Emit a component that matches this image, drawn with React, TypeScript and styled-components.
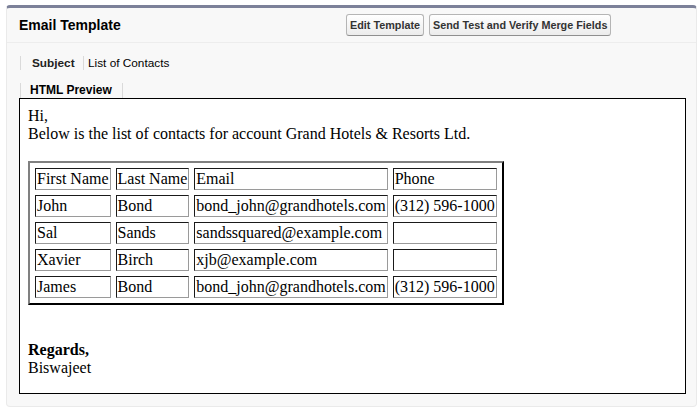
import React from "react";
import styled, { createGlobalStyle } from "styled-components";

type Contact = {
  first: string;
  last: string;
  email: string;
  phone: string;
};

const contacts: Contact[] = [
  { first: "John", last: "Bond", email: "bond_john@grandhotels.com", phone: "(312) 596-1000" },
  { first: "Sal", last: "Sands", email: "sandssquared@example.com", phone: "" },
  { first: "Xavier", last: "Birch", email: "xjb@example.com", phone: "" },
  { first: "James", last: "Bond", email: "bond_john@grandhotels.com", phone: "(312) 596-1000" },
];

const GlobalStyle = createGlobalStyle`
  html, body {
    margin: 0;
    padding: 0;
    background: #fff;
    font-family: "Liberation Sans", Arial, sans-serif;
  }
`;

const Panel = styled.section`
  margin: 5px 3px 0 6px;
  background: #f8f8f8;
  border: 1px solid #eaeaea;
  border-top: 3px solid #7c8199;
  border-radius: 4px;
  padding-bottom: 12px;
`;

const Header = styled.div`
  display: flex;
  align-items: center;
  height: 34px;
  border-bottom: 1px solid #ededed;
`;

const Title = styled.h2`
  flex: 0 0 339px;
  box-sizing: border-box;
  margin: 0;
  padding-left: 12px;
  font-size: 14px;
  font-weight: bold;
  color: #000;
`;

const ButtonGroup = styled.div`
  display: flex;
  gap: 5px;
`;

const Button = styled.button`
  height: 22px;
  padding: 0 3px;
  border: 1px solid #b5b5b5;
  border-bottom-color: #8f8f8f;
  border-radius: 3px;
  background: linear-gradient(#ffffff, #ececec);
  color: #333;
  font-family: "Liberation Sans", Arial, sans-serif;
  font-size: 10.8px;
  font-weight: bold;
  cursor: pointer;
`;

const FieldRow = styled.div`
  display: flex;
  margin: 13px 0 0 13px;
  height: 14px;
  line-height: 14px;
  font-size: 11.8px;
`;

const Label = styled.div`
  width: 64px;
  box-sizing: border-box;
  padding-left: 11px;
  border-left: 1px solid #dadada;
  border-right: 1px solid #dadada;
  font-weight: bold;
  color: #222;
`;

const Value = styled.div`
  padding-left: 4px;
  color: #000;
`;

const Tab = styled.div`
  display: inline-block;
  margin: 13px 0 0 13px;
  padding: 0 10px 0 9px;
  height: 15px;
  line-height: 15px;
  border-left: 1px solid #dadada;
  border-right: 1px solid #dadada;
  font-size: 12px;
  font-weight: bold;
  color: #000;
`;

const Preview = styled.div`
  box-sizing: border-box;
  height: 296px;
  margin: 0 10px 0 12px;
  padding: 8px;
  background: #fff;
  border: 1px solid #000;
  font-family: "Liberation Serif", "Times New Roman", serif;
  font-size: 16px;
  color: #000;
`;

const ContactTable = styled.table`
  border: 2px outset #808080;
  border-color: #808080 #333 #333 #808080;
  border-spacing: 5px;
`;

const Cell = styled.td`
  padding: 1px;
  border: 1px inset #808080;
  border-color: #6f6f6f #9a9a9a #9a9a9a #6f6f6f;
  white-space: nowrap;
  height: 18px;
`;

export default function App(): React.ReactElement {
  return (
    <>
      <GlobalStyle />
      <Panel>
        <Header>
          <Title>Email Template</Title>
          <ButtonGroup>
            <Button>Edit Template</Button>
            <Button>Send Test and Verify Merge Fields</Button>
          </ButtonGroup>
        </Header>

        <FieldRow>
          <Label>Subject</Label>
          <Value>List of Contacts</Value>
        </FieldRow>

        <Tab>HTML Preview</Tab>

        <Preview>
          Hi,
          <br />
          Below is the list of contacts for account Grand Hotels &amp; Resorts Ltd.
          <br />
          <br />
          <ContactTable>
            <tbody>
              <tr>
                <Cell>First Name</Cell>
                <Cell>Last Name</Cell>
                <Cell>Email</Cell>
                <Cell>Phone</Cell>
              </tr>
              {contacts.map((c, i) => (
                <tr key={i}>
                  <Cell>{c.first}</Cell>
                  <Cell>{c.last}</Cell>
                  <Cell>{c.email}</Cell>
                  <Cell>{c.phone}</Cell>
                </tr>
              ))}
            </tbody>
          </ContactTable>
          <br />
          <br />
          <b>Regards,</b>
          <br />
          Biswajeet
        </Preview>
      </Panel>
    </>
  );
}
